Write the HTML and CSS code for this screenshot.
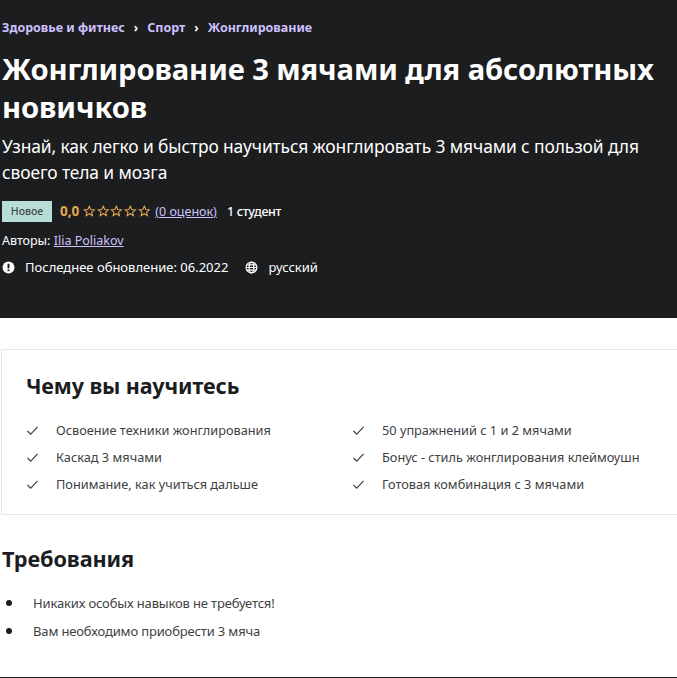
FILE: index.html
```html
<!DOCTYPE html>
<html lang="ru">
<head>
    <meta charset="UTF-8">
    <meta name="viewport" content="width=device-width, initial-scale=1.0">
    <title>Жонглирование 3 мячами для абсолютных новичков</title>
    <link rel="stylesheet" href="styles.css">
</head>
<body>
    <header class="hero">
        <nav class="crumbs">
            <a href="#">Здоровье и фитнес</a>
            <span class="crumb-sep">›</span>
            <a href="#">Спорт</a>
            <span class="crumb-sep">›</span>
            <a href="#">Жонглирование</a>
        </nav>
        <h1>Жонглирование 3 мячами для абсолютных новичков</h1>
        <p class="subtitle">Узнай, как легко и быстро научиться жонглировать 3 мячами с пользой для своего тела и мозга</p>
        <div class="rating-row">
            <span class="badge">Новое</span>
            <span class="score">0,0</span>
            <span class="stars">
                <svg viewBox="0 0 12 12"><path d="M6 1.2l1.4 3.1 3.4.3-2.6 2.2.8 3.3L6 8.3l-3 1.8.8-3.3-2.6-2.2 3.4-.3z"/></svg>
                <svg viewBox="0 0 12 12"><path d="M6 1.2l1.4 3.1 3.4.3-2.6 2.2.8 3.3L6 8.3l-3 1.8.8-3.3-2.6-2.2 3.4-.3z"/></svg>
                <svg viewBox="0 0 12 12"><path d="M6 1.2l1.4 3.1 3.4.3-2.6 2.2.8 3.3L6 8.3l-3 1.8.8-3.3-2.6-2.2 3.4-.3z"/></svg>
                <svg viewBox="0 0 12 12"><path d="M6 1.2l1.4 3.1 3.4.3-2.6 2.2.8 3.3L6 8.3l-3 1.8.8-3.3-2.6-2.2 3.4-.3z"/></svg>
                <svg viewBox="0 0 12 12"><path d="M6 1.2l1.4 3.1 3.4.3-2.6 2.2.8 3.3L6 8.3l-3 1.8.8-3.3-2.6-2.2 3.4-.3z"/></svg>
            </span>
            <a class="link" href="#">(0 оценок)</a>
            <span class="students">1 студент</span>
        </div>
        <div class="authors">Авторы: <a class="link" href="#">Ilia Poliakov</a></div>
        <div class="meta-row">
            <span class="meta-item">
                <svg class="meta-icon" viewBox="0 0 12 12"><circle cx="6" cy="6" r="5.5" fill="#fff"/><rect x="5.1" y="2.6" width="1.8" height="4.2" fill="#1c1d1f"/><rect x="5.1" y="7.8" width="1.8" height="1.6" fill="#1c1d1f"/></svg>
                Последнее обновление: 06.2022
            </span>
            <span class="meta-item">
                <svg class="meta-icon" viewBox="0 0 12 12" fill="none" stroke="#fff" stroke-width="1.1"><circle cx="6" cy="6" r="5"/><ellipse cx="6" cy="6" rx="2.2" ry="5"/><path d="M1 6h10M1.8 3.5h8.4M1.8 8.5h8.4"/></svg>
                русский
            </span>
        </div>
    </header>

    <section class="learn">
        <h2>Чему вы научитесь</h2>
        <ul class="learn-list">
            <li><svg class="check" viewBox="0 0 14 12"><path d="M1.5 6.5l3.6 3.6 7.4-8"/></svg>Освоение техники жонглирования</li>
            <li><svg class="check" viewBox="0 0 14 12"><path d="M1.5 6.5l3.6 3.6 7.4-8"/></svg>50 упражнений с 1 и 2 мячами</li>
            <li><svg class="check" viewBox="0 0 14 12"><path d="M1.5 6.5l3.6 3.6 7.4-8"/></svg>Каскад 3 мячами</li>
            <li><svg class="check" viewBox="0 0 14 12"><path d="M1.5 6.5l3.6 3.6 7.4-8"/></svg>Бонус - стиль жонглирования клеймоушн</li>
            <li><svg class="check" viewBox="0 0 14 12"><path d="M1.5 6.5l3.6 3.6 7.4-8"/></svg>Понимание, как учиться дальше</li>
            <li><svg class="check" viewBox="0 0 14 12"><path d="M1.5 6.5l3.6 3.6 7.4-8"/></svg>Готовая комбинация с 3 мячами</li>
        </ul>
    </section>

    <section class="reqs">
        <h2>Требования</h2>
        <ul class="req-list">
            <li>Никаких особых навыков не требуется!</li>
            <li>Вам необходимо приобрести 3 мяча</li>
        </ul>
    </section>
    <div class="bottom-line"></div>
</body>
</html>
```

FILE: styles.css
```css
* {
    box-sizing: border-box;
}
body {
    margin: 0;
    padding: 0;
    width: 677px;
    height: 678px;
    overflow: hidden;
    background-color: #fff;
    color: #1c1d1f;
    font-family: "Noto Sans", "Open Sans", sans-serif;
}
a {
    color: inherit;
}
.hero {
    height: 318px;
    padding: 19px 0 0 2px;
    background-color: #1c1d1f;
    color: #fff;
}
.crumbs {
    display: flex;
    align-items: center;
    height: 16px;
    font-size: 12.5px;
    font-weight: 700;
    color: #cec0fc;
}
.crumbs a {
    text-decoration: none;
}
.crumb-sep {
    margin: 0 9px;
    color: #fff;
    font-size: 12px;
}
.hero h1 {
    margin: 15px 0 0;
    font-size: 29.2px;
    line-height: 38px;
    font-weight: 700;
    letter-spacing: -0.1px;
}
.subtitle {
    margin: 7px 0 0;
    width: 660px;
    font-size: 17.4px;
    line-height: 26px;
    letter-spacing: -0.1px;
}
.rating-row {
    display: flex;
    align-items: center;
    margin-top: 15px;
    height: 22px;
    font-size: 12.5px;
}
.badge {
    width: 50px;
    height: 21px;
    line-height: 21px;
    text-align: center;
    background-color: #b8dcd6;
    color: #3d4b48;
    font-size: 10.5px;
    font-weight: 500;
}
.score {
    margin-left: 8px;
    color: #e5a850;
    font-weight: 700;
    font-size: 13.5px;
}
.stars {
    display: flex;
    margin-left: 4px;
    gap: 1px;
}
.stars svg {
    width: 12.6px;
    height: 12.6px;
    fill: none;
    stroke: #e5a850;
    stroke-width: 1;
}
.link {
    color: #cec0fc;
    text-decoration: underline;
}
.rating-row .link {
    margin-left: 5px;
}
.students {
    margin-left: 10px;
    font-weight: 500;
    letter-spacing: -0.3px;
}
.authors {
    margin-top: 10px;
    height: 18px;
    line-height: 18px;
    font-size: 12.5px;
}
.meta-row {
    display: flex;
    align-items: center;
    gap: 17px;
    margin-top: 8px;
    height: 18px;
    font-size: 13px;
}
.meta-item {
    display: flex;
    align-items: center;
    gap: 10px;
}
.meta-icon {
    width: 13px;
    height: 13px;
}
.learn {
    margin: 31px 0 0 1px;
    height: 166px;
    padding: 22px 24px 0;
    border: 1px solid #e4e5e6;
    border-right: none;
}
.learn h2 {
    margin: 0;
    font-size: 21.5px;
    line-height: 28px;
    font-weight: 700;
    letter-spacing: -0.1px;
}
.learn-list {
    display: grid;
    grid-template-columns: 326px 1fr;
    row-gap: 5px;
    margin: 19px 0 0;
    padding: 0;
    list-style: none;
}
.learn-list li {
    display: flex;
    align-items: center;
    height: 22px;
    font-size: 12.75px;
    color: #3e4143;
}
.check {
    flex: none;
    width: 13px;
    height: 11px;
    margin-right: 17px;
    fill: none;
    stroke: #3e4143;
    stroke-width: 1.3;
}
.reqs {
    margin-top: 30px;
    padding-left: 2px;
}
.reqs h2 {
    margin: 0;
    font-size: 21.7px;
    line-height: 28px;
    font-weight: 700;
    letter-spacing: -0.1px;
}
.req-list {
    margin: 19px 0 0;
    padding: 0;
    list-style: none;
}
.req-list li {
    position: relative;
    height: 22px;
    margin-bottom: 6px;
    padding-left: 31px;
    line-height: 22px;
    font-size: 13px;
    letter-spacing: -0.15px;
    color: #3e4143;
}
.req-list li::before {
    content: "";
    position: absolute;
    left: 4px;
    top: 8px;
    width: 6px;
    height: 6px;
    border-radius: 50%;
    background-color: #1c1d1f;
}
.bottom-line {
    height: 1px;
    margin-top: 35px;
    background-color: #1c1d1f;
}
```
